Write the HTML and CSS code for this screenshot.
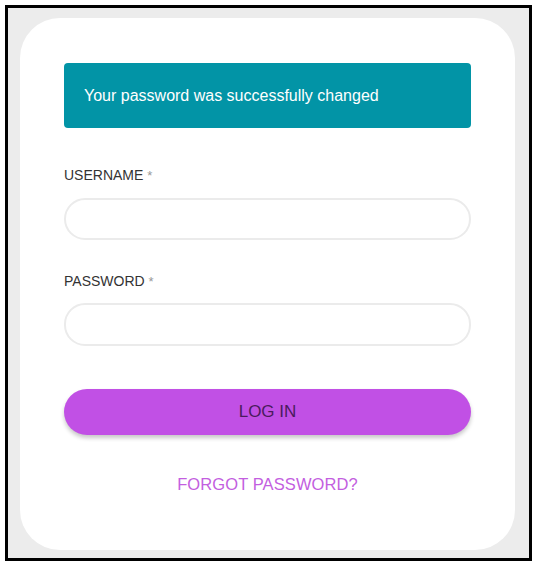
FILE: index.html
```html
<!DOCTYPE html>
<html lang="en">
<head>
<meta charset="utf-8">
<title>Log in</title>
<link rel="stylesheet" href="styles.css">
</head>
<body>
<div class="frame">
  <div class="card">
    <div class="alert">Your password was successfully changed</div>
    <form class="form">
      <label class="label label-user" for="username">USERNAME <span class="req">*</span></label>
      <input class="input" id="username" type="text">
      <label class="label label-pass" for="password">PASSWORD <span class="req">*</span></label>
      <input class="input" id="password" type="password">
      <button class="btn" type="button">LOG IN</button>
      <a class="forgot" href="#">FORGOT PASSWORD?</a>
    </form>
  </div>
</div>
</body>
</html>
```
FILE: styles.css
```css
* { box-sizing: border-box; }
html, body { margin: 0; padding: 0; background: #fff; }
body { font-family: "Liberation Sans", Arial, sans-serif; }
.frame {
  margin: 5px 0 0 5px;
  width: 527px;
  height: 556px;
  border: 3px solid #000;
  background: #ececec;
  padding: 10px 12px 8px 12px;
}
.card {
  width: 495px;
  height: 532px;
  background: #fff;
  border-radius: 40px;
  padding: 45px 44px 0 44px;
}
.alert {
  height: 65px;
  background: #0294a6;
  color: #fff;
  border-radius: 4px;
  font-size: 16px;
  padding-left: 20px;
  display: flex;
  align-items: center;
}
.form { display: flex; flex-direction: column; }
.label {
  font-size: 14px;
  line-height: 16px;
  color: #333;
  margin-top: 39px;
}
.label-pass { margin-top: 33px; }
.req { color: #999; font-size: 13px; }
.input {
  margin-top: 14px;
  height: 42px;
  border: 2px solid #ebebeb;
  border-radius: 21px;
  background: #fff;
  outline: none;
}
.label-pass + .input { margin-top: 13px; height: 43px; }
.btn {
  margin-top: 43px;
  height: 46px;
  border: 0;
  border-radius: 23px;
  background: #c150e5;
  color: #4b1b5d;
  font-family: "Liberation Sans", Arial, sans-serif;
  font-size: 17px;
  box-shadow: 0 3px 4px rgba(0,0,0,0.22);
}
.forgot {
  margin-top: 40px;
  align-self: center;
  font-size: 16.5px;
  line-height: 18px;
  letter-spacing: 0.1px;
  color: #c35ee0;
  text-decoration: none;
}
```
